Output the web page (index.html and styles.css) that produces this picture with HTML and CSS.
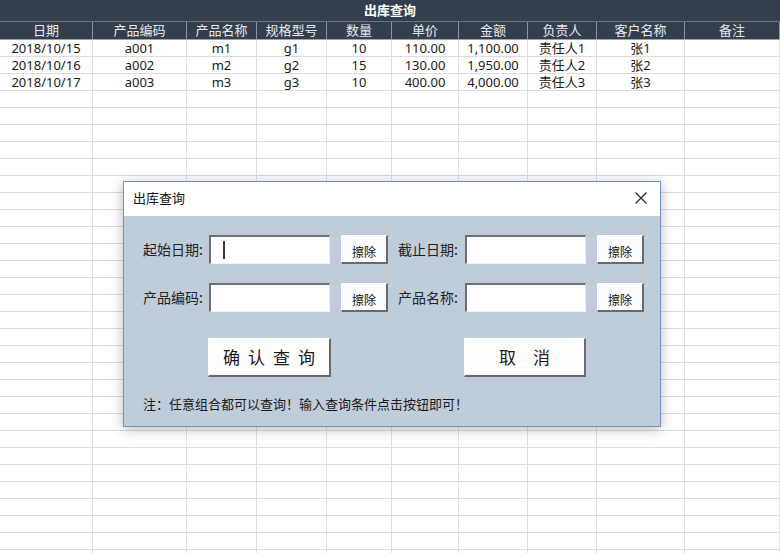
FILE: index.html
```html
<!DOCTYPE html>
<html lang="zh">
<head>
<meta charset="utf-8">
<title>出库查询</title>
<link rel="stylesheet" href="styles.css">
</head>
<body>
<div class="sheet">
  <div class="title-bar">出库查询</div>
  <div class="row head">
    <div class="c">日期</div><div class="c">产品编码</div><div class="c">产品名称</div><div class="c">规格型号</div><div class="c">数量</div><div class="c">单价</div><div class="c">金额</div><div class="c">负责人</div><div class="c">客户名称</div><div class="c">备注</div>
  </div>
  <div class="row"><div class="c">2018/10/15</div><div class="c">a001</div><div class="c">m1</div><div class="c">g1</div><div class="c">10</div><div class="c">110.00</div><div class="c">1,100.00</div><div class="c">责任人1</div><div class="c">张1</div><div class="c"></div></div>
  <div class="row"><div class="c">2018/10/16</div><div class="c">a002</div><div class="c">m2</div><div class="c">g2</div><div class="c">15</div><div class="c">130.00</div><div class="c">1,950.00</div><div class="c">责任人2</div><div class="c">张2</div><div class="c"></div></div>
  <div class="row"><div class="c">2018/10/17</div><div class="c">a003</div><div class="c">m3</div><div class="c">g3</div><div class="c">10</div><div class="c">400.00</div><div class="c">4,000.00</div><div class="c">责任人3</div><div class="c">张3</div><div class="c"></div></div>
  <div id="empty"></div>
</div>

<div class="dialog">
  <div class="dlg-title">
    <span>出库查询</span>
    <svg class="close" width="14" height="14" viewBox="0 0 14 14"><path d="M1.5 1.5 L12.5 12.5 M12.5 1.5 L1.5 12.5" stroke="#2b2b2b" stroke-width="1.3" fill="none"/></svg>
  </div>
  <div class="dlg-body">
    <div class="form-row">
      <div class="lbl">起始日期:</div><div class="field"><span class="caret"></span></div><div class="small-btn">擦除</div>
      <div class="lbl lbl2">截止日期:</div><div class="field"></div><div class="small-btn">擦除</div>
    </div>
    <div class="form-row">
      <div class="lbl">产品编码:</div><div class="field"></div><div class="small-btn">擦除</div>
      <div class="lbl lbl2">产品名称:</div><div class="field"></div><div class="small-btn">擦除</div>
    </div>
    <div class="btn-row">
      <div class="big-btn">确认查询</div>
      <div class="big-btn cancel">取消</div>
    </div>
    <div class="note">注：任意组合都可以查询！输入查询条件点击按钮即可！</div>
  </div>
</div>
<script>
(function(){
  var e=document.getElementById('empty');var h='';
  for(var i=0;i<28;i++){h+='<div class="row">';for(var j=0;j<10;j++){h+='<div class="c"></div>';}h+='</div>';}
  e.outerHTML=h;
})();
</script>
</body>
</html>
```

FILE: styles.css
```css
html, body {
  margin: 0;
  padding: 0;
  background: #ffffff;
  overflow: hidden;
}
body {
  width: 780px;
  height: 553px;
  font-family: "Noto Sans", "Noto Sans CJK SC", sans-serif;
  position: relative;
}
.sheet {
  width: 780px;
}
.title-bar {
  height: 21px;
  background: #333f4f;
  color: #ffffff;
  font-weight: bold;
  font-size: 13px;
  line-height: 21px;
  text-align: center;
  border-bottom: 1px solid #6b7585;
}
.row {
  display: grid;
  grid-template-columns: 93px 94px 70px 70px 65px 67px 69px 69px 88px 1fr;
  height: 17px;
}
.c {
  box-sizing: border-box;
  height: 17px;
  border-right: 1px solid #e0e0e0;
  border-bottom: 1px solid #dcdcdc;
  font-size: 13px;
  line-height: 16px;
  text-align: center;
  color: #1a1a1a;
  white-space: nowrap;
  overflow: hidden;
}
.row.head {
  height: 18px;
  background: #333f4f;
}
.row.head .c {
  height: 18px;
  line-height: 17px;
  color: #e6e9ee;
  border-right: 1px solid #8a93a0;
  border-bottom: 1px solid #9aa2ae;
}

/* dialog overlay */
.dialog {
  position: absolute;
  left: 123px;
  top: 181px;
  width: 538px;
  height: 246px;
  box-sizing: border-box;
  border: 1px solid #6f94c4;
  background: #bfcddb;
  box-shadow: 0 2px 12px rgba(0,0,0,0.28);
  display: flex;
  flex-direction: column;
}
.dlg-title {
  height: 34px;
  background: #ffffff;
  display: flex;
  align-items: center;
  justify-content: space-between;
  padding: 0 12px 3px 9px;
  box-sizing: border-box;
  font-family: "Noto Sans CJK SC", sans-serif;
  font-size: 13px;
  color: #111;
}
.close {
  display: block;
}
.dlg-body {
  padding: 19px 0 0 19px;
  font-family: "Noto Sans CJK SC", sans-serif;
  color: #222;
}
.form-row {
  display: flex;
  align-items: center;
  height: 29px;
  margin-bottom: 19px;
}
.lbl {
  width: 66px;
  font-size: 14px;
  line-height: 29px;
  white-space: nowrap;
}
.lbl2 {
  width: 67px;
  margin-left: 10px;
}
.field {
  width: 121px;
  height: 29px;
  box-sizing: border-box;
  background: #ffffff;
  border-top: 2px solid #6f6f6f;
  border-left: 2px solid #6f6f6f;
  border-right: 1px solid #f2f2f2;
  border-bottom: 1px solid #f2f2f2;
  position: relative;
}
.caret {
  position: absolute;
  left: 12px;
  top: 4px;
  width: 2px;
  height: 18px;
  background: #3a3a3a;
}
.small-btn {
  width: 47px;
  height: 29px;
  margin-left: 11px;
  box-sizing: border-box;
  background: #fbfbfb;
  border-top: 1px solid #ffffff;
  border-left: 1px solid #ffffff;
  border-right: 2px solid #6a6a6a;
  border-bottom: 2px solid #6a6a6a;
  font-size: 12px;
  text-align: center;
  padding-top: 8px;
  line-height: 16px;
  color: #111;
}
.btn-row {
  display: flex;
  padding-left: 65px;
  margin-top: 26px;
}
.big-btn {
  width: 123px;
  height: 39px;
  box-sizing: border-box;
  background: #fdfdfd;
  border-top: 1px solid #ffffff;
  border-left: 1px solid #ffffff;
  border-right: 2px solid #6a6a6a;
  border-bottom: 2px solid #6a6a6a;
  font-size: 17px;
  font-weight: normal;
  line-height: 36px;
  text-align: center;
  letter-spacing: 8px;
  padding-left: 8px;
  color: #1a1a1a;
}
.big-btn.cancel {
  margin-left: 133px;
  letter-spacing: 17px;
  padding-left: 17px;
  width: 122px;
}
.note {
  margin-top: 18px;
  font-size: 13px;
  line-height: 18px;
  color: #1a1a1a;
}
```
